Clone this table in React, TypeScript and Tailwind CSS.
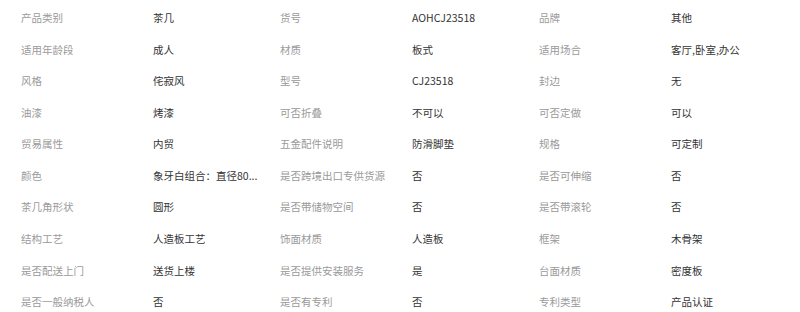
import { Fragment } from "react"

const ROWS: [string, string][][] = [
    [["产品类别", "茶几"], ["货号", "AOHCJ23518"], ["品牌", "其他"]],
    [["适用年龄段", "成人"], ["材质", "板式"], ["适用场合", "客厅,卧室,办公"]],
    [["风格", "侘寂风"], ["型号", "CJ23518"], ["封边", "无"]],
    [["油漆", "烤漆"], ["可否折叠", "不可以"], ["可否定做", "可以"]],
    [["贸易属性", "内贸"], ["五金配件说明", "防滑脚垫"], ["规格", "可定制"]],
    [["颜色", "象牙白组合：直径80..."], ["是否跨境出口专供货源", "否"], ["是否可伸缩", "否"]],
    [["茶几角形状", "圆形"], ["是否带储物空间", "否"], ["是否带滚轮", "否"]],
    [["结构工艺", "人造板工艺"], ["饰面材质", "人造板"], ["框架", "木骨架"]],
    [["是否配送上门", "送货上楼"], ["是否提供安装服务", "是"], ["台面材质", "密度板"]],
    [["是否一般纳税人", "否"], ["是否有专利", "否"], ["专利类型", "产品认证"]],
]

export default function App() {
    return (
        <div className="w-[800px] h-[312px] overflow-hidden bg-white pt-[2px] pl-[21px] font-['Microsoft_YaHei','Noto_Sans_CJK_SC',sans-serif] text-[10.5px]">
            {ROWS.map((row, i) => (
                <div key={i} className="grid grid-cols-[132px_127px_132px_127px_132px_1fr] h-[31.6px] items-center">
                    {row.map(([label, value]) => (
                        <Fragment key={label}>
                            <div className="text-[#9a9a9a] whitespace-nowrap">{label}</div>
                            <div className="text-[#333] whitespace-nowrap">{value}</div>
                        </Fragment>
                    ))}
                </div>
            ))}
        </div>
    )
}
